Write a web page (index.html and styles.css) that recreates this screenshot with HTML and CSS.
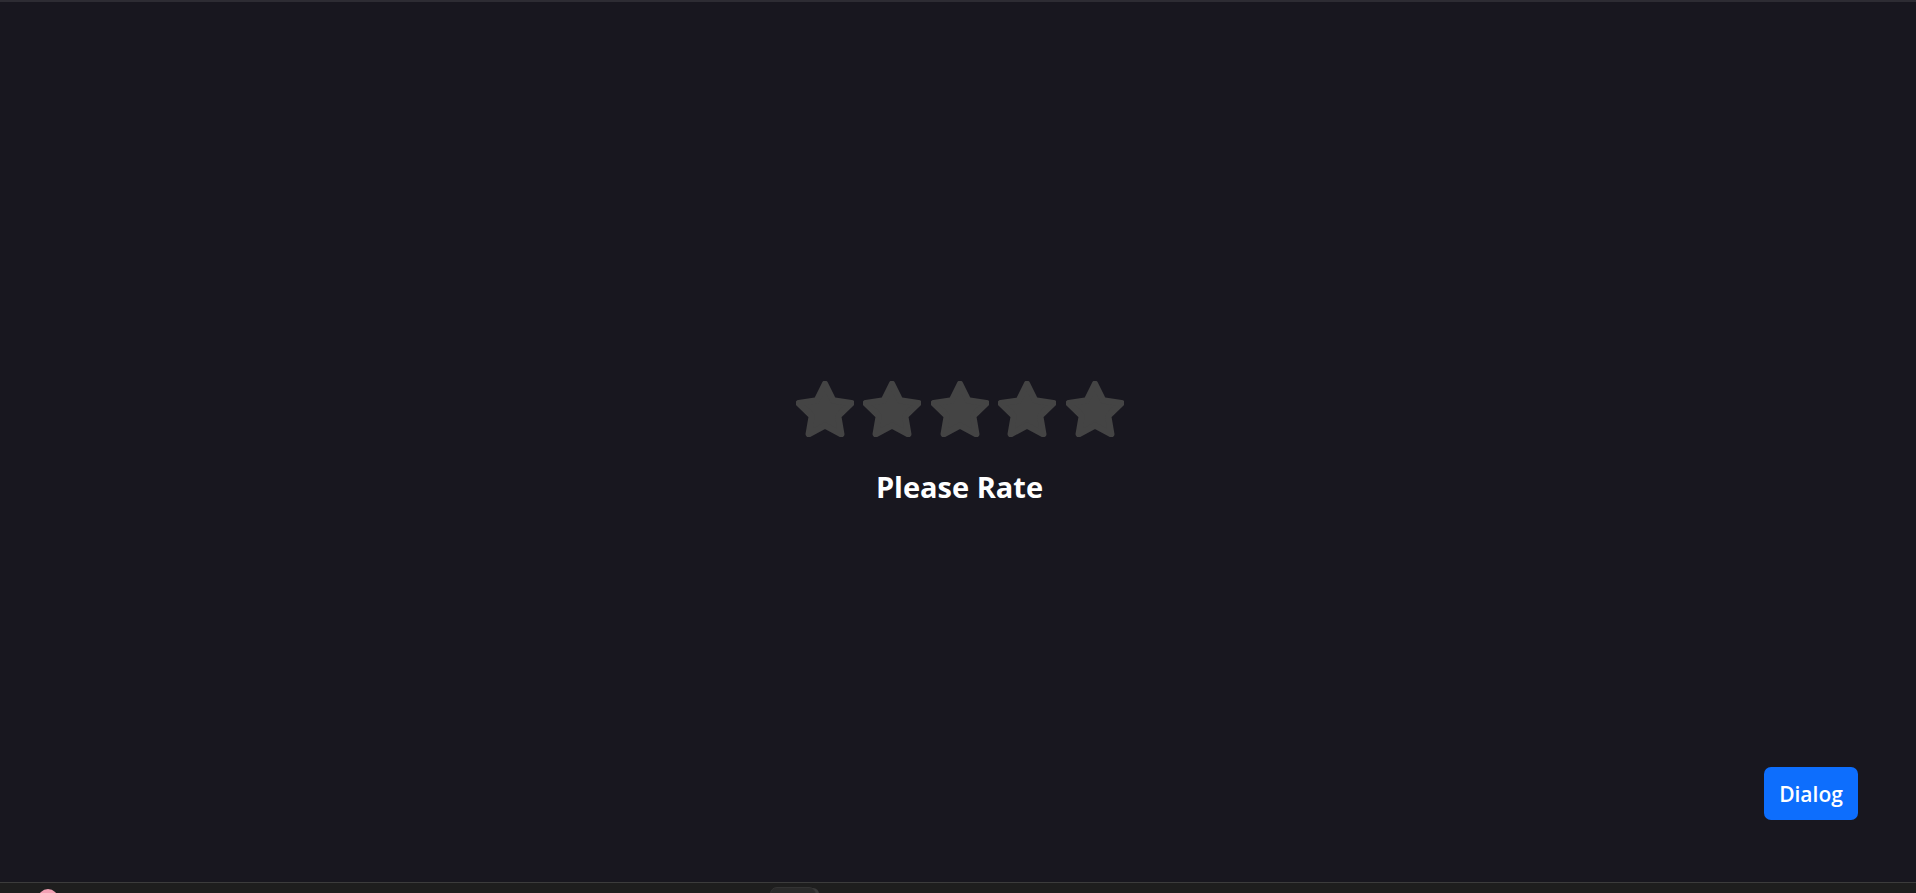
FILE: index.html
```html
<!DOCTYPE html>
<html lang="en">
<head>
<meta charset="utf-8">
<title>Please Rate</title>
<link rel="stylesheet" href="styles.css">
</head>
<body>
<main class="stage">
  <div class="rating">
    <div class="stars">
      <svg class="star" viewBox="1 1 22 21" aria-hidden="true"><polygon points="12,2 15.09,8.26 22,9.27 17,14.14 18.18,21.02 12,17.77 5.82,21.02 7,14.14 2,9.27 8.91,8.26"/></svg>
      <svg class="star" viewBox="1 1 22 21" aria-hidden="true"><polygon points="12,2 15.09,8.26 22,9.27 17,14.14 18.18,21.02 12,17.77 5.82,21.02 7,14.14 2,9.27 8.91,8.26"/></svg>
      <svg class="star" viewBox="1 1 22 21" aria-hidden="true"><polygon points="12,2 15.09,8.26 22,9.27 17,14.14 18.18,21.02 12,17.77 5.82,21.02 7,14.14 2,9.27 8.91,8.26"/></svg>
      <svg class="star" viewBox="1 1 22 21" aria-hidden="true"><polygon points="12,2 15.09,8.26 22,9.27 17,14.14 18.18,21.02 12,17.77 5.82,21.02 7,14.14 2,9.27 8.91,8.26"/></svg>
      <svg class="star" viewBox="1 1 22 21" aria-hidden="true"><polygon points="12,2 15.09,8.26 22,9.27 17,14.14 18.18,21.02 12,17.77 5.82,21.02 7,14.14 2,9.27 8.91,8.26"/></svg>
    </div>
    <h2 class="title">Please Rate</h2>
  </div>
  <button class="dialog-btn" type="button">Dialog</button>
</main>
<footer class="taskbar">
  <span class="dot"></span>
  <span class="tab"></span>
</footer>
</body>
</html>
```
FILE: styles.css
```css
* { box-sizing: border-box; }
html, body { margin: 0; padding: 0; height: 100%; }
body {
  display: flex;
  flex-direction: column;
  background: #18171f;
  font-family: "Open Sans", "Noto Sans", sans-serif;
  border-top: 2px solid #2d2c33;
  overflow: hidden;
}
.stage {
  flex: 1;
  position: relative;
  display: flex;
  align-items: center;
  justify-content: center;
}
.rating {
  display: flex;
  flex-direction: column;
  align-items: center;
  gap: 32px;
  padding-left: 3px;
}
.stars {
  display: flex;
  gap: 9.5px;
}
.star {
  width: 58px;
  height: 56px;
  display: block;
}
.star polygon {
  fill: #444444;
  stroke: #444444;
  stroke-width: 2.4;
  stroke-linejoin: round;
}
.title {
  margin: 0;
  color: #ffffff;
  font-size: 29px;
  font-weight: 700;
  line-height: 35px;
}
.dialog-btn {
  position: absolute;
  right: 58px;
  bottom: 62px;
  height: 53px;
  width: 94px;
  padding: 0;
  border: none;
  border-radius: 7px;
  background: #0d6efd;
  color: #ffffff;
  font-family: "Open Sans", "Noto Sans", sans-serif;
  font-size: 21px;
  font-weight: 600;
  display: flex;
  align-items: center;
  justify-content: center;
}
.taskbar {
  height: 11px;
  flex: none;
  background: #1e1e1e;
  border-top: 1px solid #3c3c3c;
  display: flex;
  align-items: flex-start;
  padding-left: 38px;
  overflow: hidden;
}
.dot {
  width: 20px;
  height: 20px;
  border-radius: 50%;
  background: #f2a1b4;
  margin-top: 6px;
  flex: none;
}
.tab {
  width: 46px;
  height: 20px;
  margin-left: 712px;
  margin-top: 4px;
  border-radius: 7px;
  background: #2a2a2a;
  border: 1px solid #333333;
  box-shadow: 4px 0 0 -1px #3a3a3a;
  flex: none;
}
```
